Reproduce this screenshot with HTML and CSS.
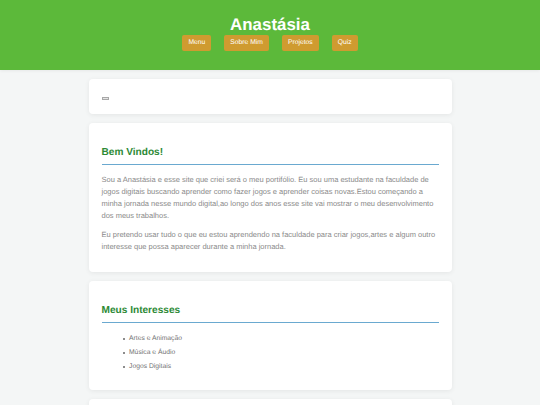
FILE: index.html
```html
<!DOCTYPE html>
<html lang="pt">

<head>
    <meta charset="UTF-8">
    <meta name="viewport" content="width=device-width, initial-scale=1.0">
    <title>Anastásia</title>
    <link rel="stylesheet" href="styles.css">
</head>

<body>
    <header class="site-header">
        <h1>Anastásia</h1>
        <nav class="site-nav">
            <a href="#">Menu</a>
            <a href="#">Sobre Mim</a>
            <a href="#">Projetos</a>
            <a href="#">Quiz</a>
        </nav>
    </header>

    <main class="site-main">
        <section class="card card-image">
            <span class="broken-image"></span>
        </section>

        <section class="card">
            <h2>Bem Vindos!</h2>
            <p>Sou a Anastásia e esse site que criei será o meu portifólio. Eu sou uma estudante na faculdade de jogos digitais buscando aprender como fazer jogos e aprender coisas novas.Estou começando a minha jornada nesse mundo digital,ao longo dos anos esse site vai mostrar o meu desenvolvimento dos meus trabalhos.</p>
            <p>Eu pretendo usar tudo o que eu estou aprendendo na faculdade para criar jogos,artes e algum outro interesse que possa aparecer durante a minha jornada.</p>
        </section>

        <section class="card">
            <h2>Meus Interesses</h2>
            <ul>
                <li>Artes e Animação</li>
                <li>Música e Áudio</li>
                <li>Jogos Digitais</li>
            </ul>
        </section>

        <section class="card"></section>
    </main>
</body>

</html>
```

FILE: styles.css
```css
* {
    margin: 0;
    padding: 0;
    box-sizing: border-box;
}

html,
body {
    height: 405px;
    overflow: hidden;
}

body {
    background: #f4f6f6;
    font-family: "Liberation Sans", Arial, sans-serif;
    font-size: 7.5px;
    line-height: 12.15px;
    color: #8a8a8a;
    text-rendering: geometricPrecision;
}

.site-header {
    height: 70px;
    padding-top: 14px;
    background: #5cb93a;
    box-shadow: 0 1px 3px rgba(0, 0, 0, 0.06);
    text-align: center;
}

.site-header h1 {
    font-size: 16.9px;
    line-height: 21px;
    color: #fff;
}

.site-nav {
    display: flex;
    justify-content: center;
    gap: 13px;
}

.site-nav a {
    padding: 0 6px;
    height: 15.5px;
    background: #cf9b30;
    border-radius: 2px;
    color: #fff;
    font-size: 6.75px;
    line-height: 15.5px;
    text-decoration: none;
}

.site-main {
    width: 363px;
    margin: 9px auto 0;
    display: flex;
    flex-direction: column;
    gap: 9px;
}

.card {
    padding: 14px 13px;
    background: #fff;
    border-radius: 4px;
    box-shadow: 0 1px 5px rgba(0, 0, 0, 0.07);
}

.card-image {
    height: 35px;
    padding-top: 18px;
}

.broken-image {
    display: block;
    width: 7px;
    height: 3px;
    background: #e4e4e4;
    border: 1px solid #a8a8a8;
}

.card h2 {
    margin-top: 8px;
    margin-bottom: 9px;
    padding-bottom: 4px;
    border-bottom: 1px solid #6aa9d0;
    color: #2d8a36;
    font-size: 10.125px;
    line-height: 15px;
}

.card p {
    margin-bottom: 6.5px;
}

.card p:last-child {
    margin-bottom: 4.5px;
}

.card ul {
    padding: 0 0 2px 21.5px;
    list-style: none;
    font-size: 6.75px;
    color: #737373;
}

.card li {
    display: flex;
    align-items: center;
    gap: 4px;
    line-height: 14px;
}

.card li::before {
    content: "";
    width: 2px;
    height: 2px;
    border-radius: 50%;
    background: #666;
}
```
